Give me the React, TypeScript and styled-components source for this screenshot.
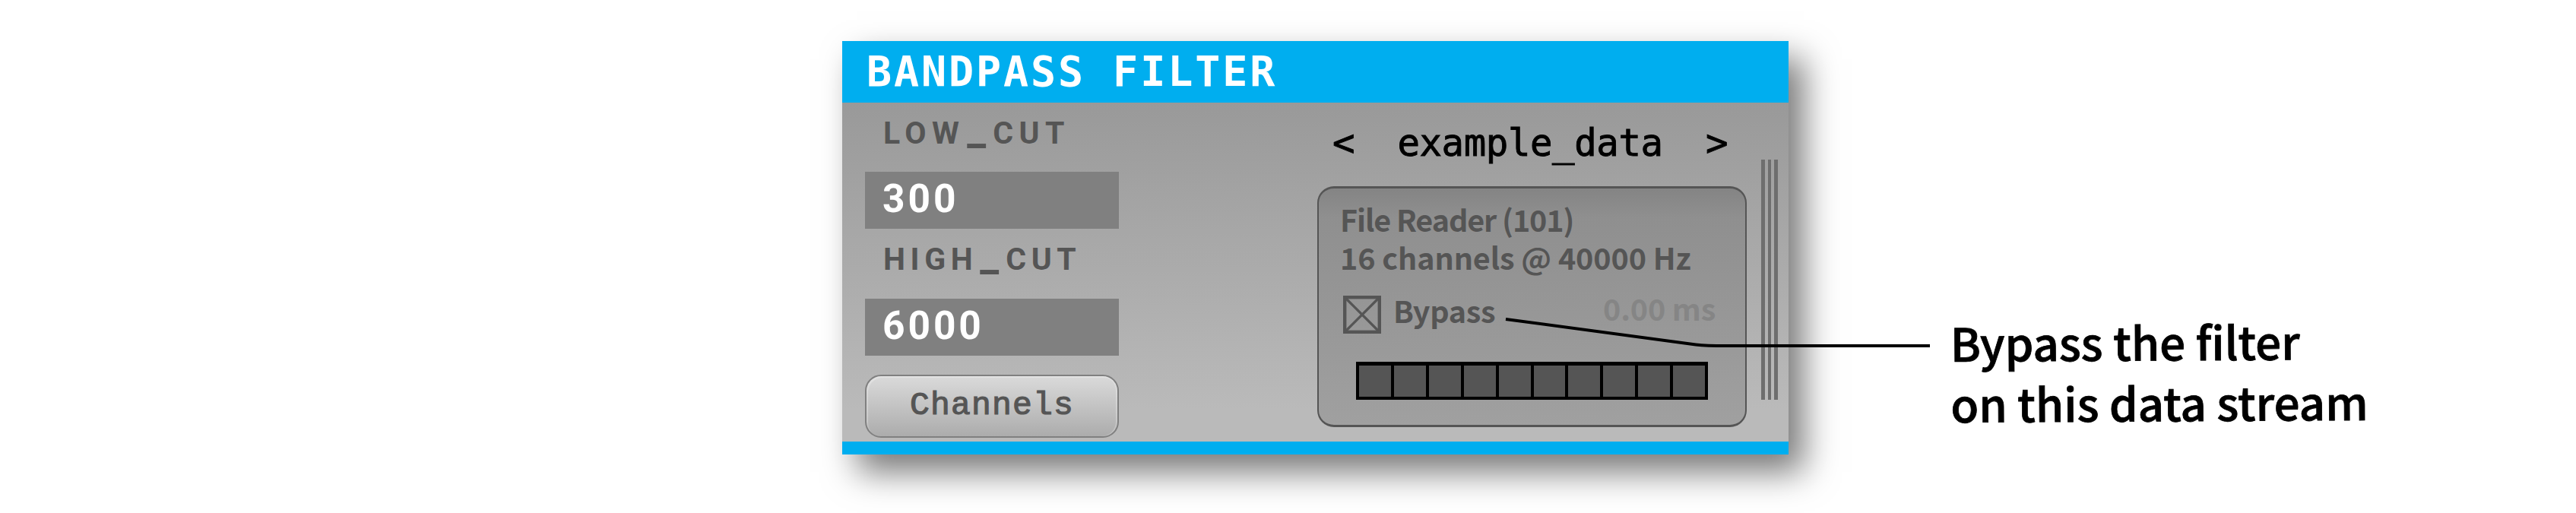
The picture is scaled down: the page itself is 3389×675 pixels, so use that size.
import React from 'react';
import styled, { createGlobalStyle } from 'styled-components';

const GlobalStyle = createGlobalStyle`
  *, *::before, *::after { box-sizing: border-box; }
  body { margin: 0; background: #fff; }
`;

const mono = '"DejaVu Sans Mono", monospace';
const sans = '"Noto Sans CJK SC", "Noto Sans", sans-serif';

const Page = styled.main`
  position: relative;
  display: flex;
  align-items: flex-start;
  width: 3389px;
  height: 675px;
  padding: 53.6px 0 0 1108px;
  overflow: hidden;
  background: #fff;
`;

const Editor = styled.section`
  display: flex;
  flex-direction: column;
  flex: none;
  width: 1244.5px;
  height: 544.4px;
  background: linear-gradient(#999 15%, #bababa 92%);
  border-bottom: 17px solid #00aeef;
  box-shadow: 20px 23px 42px rgba(0, 0, 0, 0.53);
`;

const TitleBar = styled.header`
  flex: none;
  height: 81.4px;
  padding-left: 32px;
  background: #00aeef;
  color: #fff;
  font: 700 55px/81px ${mono};
  letter-spacing: 2.9px;
  white-space: pre;
`;

const Body = styled.div`
  display: flex;
  flex: 1;
  min-height: 0;
`;

const Parameters = styled.div`
  display: flex;
  flex-direction: column;
  width: 334px;
  margin-left: 30px;
`;

const Label = styled.label<{ $spacing: number }>`
  height: 91.5px;
  padding: 15px 0 0 24px;
  color: #555;
  font: 700 41px/50px Roboto, sans-serif;
  letter-spacing: ${(p) => p.$spacing}px;
  white-space: nowrap;
`;

const Underscore = styled.span`
  display: inline-block;
  width: 34px;
  margin-left: 3px;
  line-height: 30px;
  font-size: 56px;
`;

const Field = styled.div`
  height: 75px;
  padding-left: 23px;
  background: #808080;
  color: #fff;
  font: 700 51.5px/72px Roboto, sans-serif;
  letter-spacing: 3.9px;
`;

const Button = styled.button`
  height: 83px;
  margin-top: 25px;
  padding: 0;
  border: 2.5px solid #808080;
  border-radius: 21px;
  background: linear-gradient(#dadada, #acacac);
  box-shadow: inset 2px 2px 1px rgba(255, 255, 255, 0.25), inset -2px 0 1px rgba(255, 255, 255, 0.25);
  color: #555;
  font: 400 43px/76px "Liberation Mono", monospace;
  letter-spacing: 1.2px;
  -webkit-text-stroke: 1.2px #555;
`;

const Stream = styled.div`
  display: flex;
  flex-direction: column;
  width: 565px;
  margin-left: 261px;
`;

const StreamPicker = styled.nav`
  display: flex;
  justify-content: space-between;
  height: 110px;
  padding: 24px 25px 0 20px;
  color: #000;
  font: 400 49px/60px ${mono};
  letter-spacing: -0.4px;
  -webkit-text-stroke: 0.9px #000;
`;

const StreamCard = styled.div`
  display: flex;
  flex-direction: column;
  height: 317px;
  padding: 15px 49px 0 28px;
  border: 3px solid #555;
  border-left-width: 2.5px;
  border-right-width: 2.5px;
  border-radius: 22px;
  background: linear-gradient(#848484, #8f8f8f 12%, #a0a0a0);
`;

const Info = styled.p<{ $spacing?: number }>`
  margin: 0;
  height: 49.6px;
  color: #555;
  font: 700 39.5px/50px ${sans};
  letter-spacing: ${(p) => p.$spacing ?? 0}px;
  white-space: nowrap;
`;

const BypassRow = styled.div`
  display: flex;
  align-items: flex-start;
  gap: 16px;
  height: 50px;
  margin: 27px -10px 0 4px;
`;

const BypassLabel = styled(Info)`
  margin-top: -6px;
`;

const Latency = styled(Info)`
  margin: -9px 0 0 auto;
  color: #858585;
`;

const Meter = styled.div`
  display: grid;
  grid-template-columns: repeat(10, 1fr);
  gap: 4px;
  width: 463px;
  height: 50px;
  margin: 37px 0 0 21px;
  padding: 5px 4px 4px;
  background: #000;
`;

const Cell = styled.i`
  background: #555;
`;

const Grip = styled.div`
  display: flex;
  gap: 4px;
  height: 316px;
  margin: 75px 0 0 19px;
`;

const Ridge = styled.i`
  width: 4.5px;
  background: #6e6e6e;
`;

const Leader = styled.svg`
  position: absolute;
  left: 0;
  top: 0;
  pointer-events: none;
`;

const Caption = styled.p`
  margin: 356px 0 0 213px;
  color: #000;
  font: 500 60px/80px ${sans};
  white-space: nowrap;
  -webkit-text-stroke: 0.8px #000;
  transform: rotate(-0.33deg);
  transform-origin: 0 60px;
`;

export default function App() {
  return (
    <>
      <GlobalStyle />
      <Page>
        <Editor>
          <TitleBar>BANDPASS FILTER</TitleBar>
          <Body>
            <Parameters>
              <Label $spacing={7.4}>LOW<Underscore>_</Underscore>CUT</Label>
              <Field>300</Field>
              <Label $spacing={6.6}>HIGH<Underscore>_</Underscore>CUT</Label>
              <Field>6000</Field>
              <Button>Channels</Button>
            </Parameters>
            <Stream>
              <StreamPicker>
                <span>&lt;</span>
                <span>example_data</span>
                <span>&gt;</span>
              </StreamPicker>
              <StreamCard>
                <Info $spacing={-1.1}>File Reader (101)</Info>
                <Info $spacing={-0.1}>16 channels @ 40000 Hz</Info>
                <BypassRow>
                  <svg width="50" height="50" viewBox="0 0 50 50" fill="none" stroke="#555">
                    <rect x="2.2" y="2.2" width="45.6" height="45.6" strokeWidth="4.4" />
                    <path d="M4 4 46 46M46 4 4 46" strokeWidth="3.2" />
                  </svg>
                  <BypassLabel $spacing={-0.3}>Bypass</BypassLabel>
                  <Latency $spacing={-0.2}>0.00 ms</Latency>
                </BypassRow>
                <Meter>
                  {Array.from({ length: 10 }, (_, i) => <Cell key={i} />)}
                </Meter>
              </StreamCard>
            </Stream>
            <Grip>
              <Ridge />
              <Ridge />
              <Ridge />
            </Grip>
          </Body>
        </Editor>
        <Caption>
          Bypass the filter
          <br />
          on this data stream
        </Caption>
        <Leader width="3389" height="675" fill="none" stroke="#000" strokeWidth="4">
          <path d="M1981 420 2231 453.4Q2245 455 2270 455H2539" />
        </Leader>
      </Page>
    </>
  );
}
